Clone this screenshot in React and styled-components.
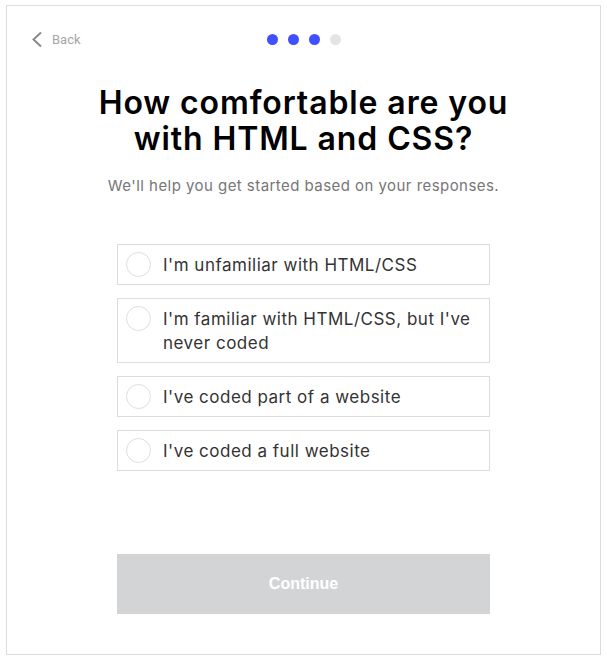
import React, { useState } from 'react';
import styled, { createGlobalStyle } from 'styled-components';

const GlobalStyle = createGlobalStyle`
  body {
    margin: 0;
    background: #fff;
    font-family: Inter, "Noto Sans", sans-serif;
  }
`;

const Frame = styled.div`
  box-sizing: border-box;
  margin: 5px 0 0 6px;
  width: 595px;
  height: 650px;
  border: 1px solid #dcdcdc;
  display: flex;
  flex-direction: column;
  align-items: center;
`;

const Header = styled.div`
  align-self: stretch;
  display: grid;
  grid-template-columns: 1fr auto 1fr;
  align-items: center;
  height: 20px;
  padding: 23px 24px 0;
`;

const BackLink = styled.a`
  display: flex;
  align-items: center;
  gap: 9px;
  color: #a6a6a6;
  font-family: Roboto, "Liberation Sans", sans-serif;
  font-size: 13px;
  text-decoration: none;
  cursor: pointer;
`;

const Dots = styled.div`
  display: flex;
  gap: 10px;
`;

const Dot = styled.span`
  width: 11px;
  height: 11px;
  border-radius: 50%;
  background: ${({ $active }) => ($active ? '#4050ff' : '#e4e4e4')};
`;

const Title = styled.h1`
  margin: 36px 0 0;
  font-size: 32px;
  line-height: 36px;
  font-weight: 600;
  color: #000;
  text-align: center;
  letter-spacing: 0.9px;
`;

const Subtitle = styled.p`
  margin: 18px 0 0;
  font-size: 15px;
  line-height: 22px;
  color: #767676;
  text-align: center;
  letter-spacing: 0.45px;
`;

const Options = styled.div`
  margin-top: 47px;
  width: 373px;
  display: flex;
  flex-direction: column;
  gap: 13px;
`;

const Option = styled.label`
  box-sizing: border-box;
  display: flex;
  align-items: flex-start;
  gap: 12px;
  padding: 7px 12px 7px 8px;
  border: 1px solid ${({ $selected }) => ($selected ? '#4050ff' : '#dcdcdc')};
  cursor: pointer;
`;

const Radio = styled.span`
  box-sizing: border-box;
  flex: none;
  width: 25px;
  height: 25px;
  border-radius: 50%;
  border: 1px solid #dedede;
  background: ${({ $selected }) => ($selected ? '#4050ff' : '#fff')};
`;

const OptionText = styled.span`
  font-size: 17px;
  line-height: 24px;
  color: #333;
  padding-top: 1px;
  letter-spacing: 0.5px;
`;

const ContinueButton = styled.button`
  margin-top: auto;
  margin-bottom: 40px;
  width: 373px;
  height: 60px;
  border: none;
  background: ${({ disabled }) => (disabled ? '#d3d4d6' : '#4050ff')};
  color: #fff;
  font-family: "Liberation Sans", Arial, sans-serif;
  font-weight: 700;
  font-size: 16px;
  cursor: ${({ disabled }) => (disabled ? 'default' : 'pointer')};
`;

const choices = [
  "I'm unfamiliar with HTML/CSS",
  "I'm familiar with HTML/CSS, but I've never coded",
  "I've coded part of a website",
  "I've coded a full website",
];

const App = () => {
  const [selected, setSelected] = useState(null);

  return (
    <>
      <GlobalStyle />
      <Frame>
        <Header>
          <BackLink>
            <svg width="12" height="17" viewBox="0 0 12 17">
              <path d="M10 1.5 L2.5 8.5 L10 15.5" fill="none" stroke="#8a8a8a" strokeWidth="2" />
            </svg>
            Back
          </BackLink>
          <Dots>
            {[0, 1, 2, 3].map(i => (
              <Dot key={i} $active={i < 3} />
            ))}
          </Dots>
          <span />
        </Header>
        <Title>
          How comfortable are you
          <br />
          with HTML and CSS?
        </Title>
        <Subtitle>We'll help you get started based on your responses.</Subtitle>
        <Options>
          {choices.map((c, i) => (
            <Option key={c} $selected={selected === i} onClick={() => setSelected(i)}>
              <Radio $selected={selected === i} />
              <OptionText>{c}</OptionText>
            </Option>
          ))}
        </Options>
        <ContinueButton disabled={selected === null}>Continue</ContinueButton>
      </Frame>
    </>
  );
};

export default App;
